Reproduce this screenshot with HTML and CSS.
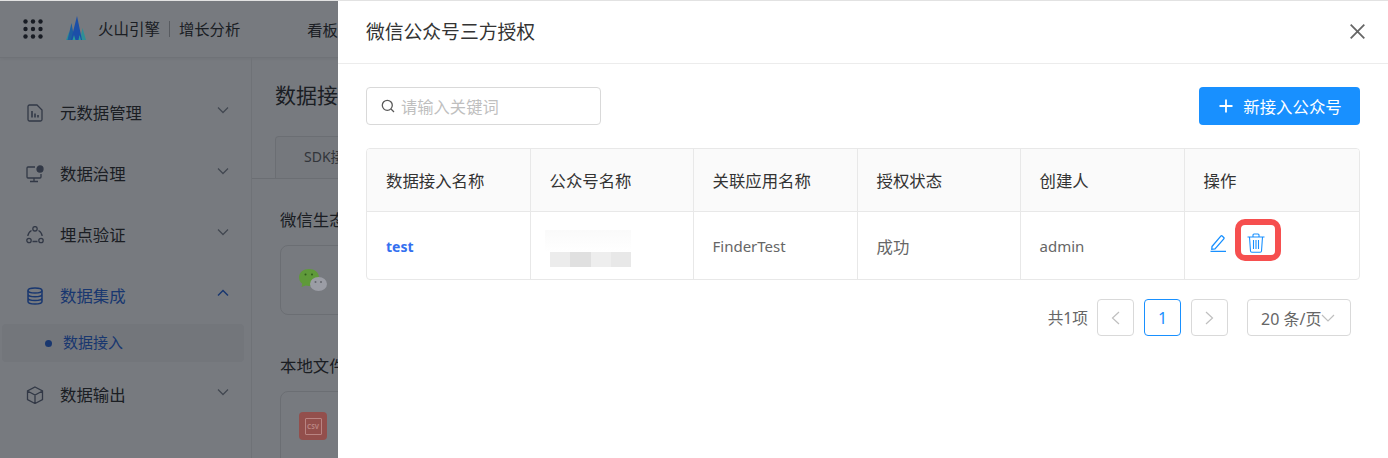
FILE: index.html
```html
<!DOCTYPE html>
<html lang="zh-CN">
<head>
<meta charset="utf-8">
<title>微信公众号三方授权</title>
<link rel="stylesheet" href="styles.css">
</head>
<body>
<div class="app">
  <header class="topbar">
    <svg class="grid-icon" width="20" height="20" viewBox="0 0 20 20"><g fill="#2b2e33"><circle cx="2.500" cy="2.500" r="2.200"/><circle cx="10" cy="2.500" r="2.200"/><circle cx="17.500" cy="2.500" r="2.200"/><circle cx="2.500" cy="10" r="2.200"/><circle cx="10" cy="10" r="2.200"/><circle cx="17.500" cy="10" r="2.200"/><circle cx="2.500" cy="17.500" r="2.200"/><circle cx="10" cy="17.500" r="2.200"/><circle cx="17.500" cy="17.500" r="2.200"/></g></svg>
    <svg class="logo over" width="20" height="25" viewBox="0 0 20 25"><path d="M0 24 3 16l3 8zM14 24l2.500-12 3.500 12z" fill="#2f8f96"/><path d="M1.500 24 5.500 7l3 17z" fill="#1d5fa0"/><path d="M5 24 11 0l5 24z" fill="#1c4fa8"/><path d="M6.500 24 8 19l1.500 5zM12.500 24l1-5 1.500 5z" fill="#2a9a9a"/></svg>
    <span class="brand">火山引擎</span>
    <span class="brand-sep"></span>
    <span class="brand-sub">增长分析</span>
    <span class="topnav">看板</span>
  </header>
  <div class="body">
    <nav class="sidebar">
      <div class="nav-item">
        <svg class="nav-icon" width="18" height="18" viewBox="0 0 18 18" fill="none" stroke="currentColor" stroke-width="1.300"><path d="M2 2.500a1.500 1.500 0 0 1 1.500-1.500H11l5 5v9.500a1.500 1.500 0 0 1-1.500 1.500h-11A1.500 1.500 0 0 1 2 15.500z"/><path d="M6 7v6.500M9 9.500v4M12 11v2.500" stroke-width="1.600"/></svg>
        <span class="nav-label">元数据管理</span>
        <svg class="chev" width="12" height="8" viewBox="0 0 12 8" fill="none" stroke="currentColor" stroke-width="1.300"><path d="M1 1.500 6 6.500l5-5"/></svg>
      </div>
      <div class="nav-item">
        <svg class="nav-icon" width="18" height="18" viewBox="0 0 18 18" fill="none" stroke="currentColor" stroke-width="1.300"><path d="M9 2H2a1 1 0 0 0-1 1v9a1 1 0 0 0 1 1h12a1 1 0 0 0 1-1V9M8 13v3M4 16.500h8"/><circle cx="14" cy="4" r="3" fill="currentColor"/></svg>
        <span class="nav-label">数据治理</span>
        <svg class="chev" width="12" height="8" viewBox="0 0 12 8" fill="none" stroke="currentColor" stroke-width="1.300"><path d="M1 1.500 6 6.500l5-5"/></svg>
      </div>
      <div class="nav-item">
        <svg class="nav-icon" width="18" height="18" viewBox="0 0 18 18" fill="none" stroke="currentColor" stroke-width="1.300"><circle cx="9" cy="2.800" r="2.200"/><circle cx="3" cy="14.500" r="2.200"/><circle cx="15" cy="14.500" r="2.200"/><path d="M5.500 4.500A7.500 7.500 0 0 0 1.800 10M12.500 4.500a7.500 7.500 0 0 1 3.700 5.500M6.500 15.500h5"/></svg>
        <span class="nav-label">埋点验证</span>
        <svg class="chev" width="12" height="8" viewBox="0 0 12 8" fill="none" stroke="currentColor" stroke-width="1.300"><path d="M1 1.500 6 6.500l5-5"/></svg>
      </div>
      <div class="nav-item nav-active">
        <svg class="nav-icon" width="18" height="18" viewBox="0 0 18 18" fill="none" stroke="currentColor" stroke-width="1.500"><ellipse cx="9" cy="3.500" rx="7" ry="2.500"/><path d="M2 3.500v11c0 1.400 3.100 2.500 7 2.500s7-1.100 7-2.500v-11M2 7.200c0 1.400 3.100 2.500 7 2.500s7-1.100 7-2.500M2 11c0 1.400 3.100 2.500 7 2.500s7-1.100 7-2.500"/></svg>
        <span class="nav-label">数据集成</span>
        <svg class="chev" width="12" height="8" viewBox="0 0 12 8" fill="none" stroke="currentColor" stroke-width="1.500"><path d="M1 6.500 6 1.500l5 5"/></svg>
      </div>
      <div class="nav-sub"><span class="nav-dot"></span><span class="nav-sub-label">数据接入</span></div>
      <div class="nav-item nav-last">
        <svg class="nav-icon" width="18" height="18" viewBox="0 0 18 18" fill="none" stroke="currentColor" stroke-width="1.300"><path d="M9 1l7.500 4v8.500L9 17.500l-7.500-4V5zM1.500 5 9 9l7.500-4M9 9v8.500"/></svg>
        <span class="nav-label">数据输出</span>
        <svg class="chev" width="12" height="8" viewBox="0 0 12 8" fill="none" stroke="currentColor" stroke-width="1.300"><path d="M1 1.500 6 6.500l5-5"/></svg>
      </div>
    </nav>
    <main class="main">
      <h1 class="page-title">数据接入</h1>
      <div class="tabs"><div class="tab">SDK接入</div></div>
      <div class="section">
        <h2 class="section-title">微信生态</h2>
        <div class="card">
          <svg class="over" width="28" height="22" viewBox="0 0 28 22"><path d="M10 0c5.500 0 10 3.300 10 8.500S15.500 17 10 17c-1.200 0-2.300-.2-3.400-.5L2.500 18l.8-3.300C1.200 13.200 0 11 0 8.500 0 3.300 4.500 0 10 0z" fill="#5f9a3a"/><ellipse cx="19.500" cy="15" rx="8.500" ry="7" fill="#9b9da5"/><circle cx="16.500" cy="13" r="1" fill="#63666d"/><circle cx="22" cy="13" r="1" fill="#63666d"/><circle cx="6.500" cy="5.500" r="1" fill="#2f5c1c"/><circle cx="13" cy="5.500" r="1" fill="#2f5c1c"/></svg>
        </div>
        <h2 class="section-title local">本地文件</h2>
        <div class="card card-tall">
          <div class="csv-badge over"><span class="csv-file">CSV</span></div>
        </div>
      </div>
    </main>
  </div>
</div>

<div class="mask"></div>
<div class="top-line"></div>

<aside class="drawer">
  <div class="drawer-head">
    <span class="drawer-title">微信公众号三方授权</span>
    <svg class="close" width="15" height="15" viewBox="0 0 15 15" fill="none" stroke="#666" stroke-width="1.800"><path d="M.7.7l13.600 13.600M14.300.7.7 14.300"/></svg>
  </div>
  <div class="drawer-body">
    <div class="toolbar">
      <div class="search">
        <svg width="14" height="14" viewBox="0 0 14 14" fill="none" stroke="#595959" stroke-width="1.300"><circle cx="6.300" cy="6.300" r="5"/><path d="M10 10l3 3"/></svg>
        <span class="placeholder">请输入关键词</span>
      </div>
      <button class="primary" type="button">
        <svg width="14" height="14" viewBox="0 0 14 14" fill="none" stroke="#fff" stroke-width="1.800"><path d="M7 .5v13M.5 7h13"/></svg>
        <span>新接入公众号</span>
      </button>
    </div>
    <div class="table-wrap">
      <table class="table">
        <colgroup><col class="c1"><col class="c2"><col class="c3"><col class="c4"><col class="c5"><col class="c6"></colgroup>
        <thead>
          <tr><th>数据接入名称</th><th>公众号名称</th><th>关联应用名称</th><th>授权状态</th><th>创建人</th><th>操作</th></tr>
        </thead>
        <tbody>
          <tr>
            <td><a class="link">test</a></td>
            <td><div class="blurred"><div class="blur-top"></div><div class="blur-bottom"><i class="b1"></i><i class="b2"></i><i class="b3"></i><i class="b4"></i></div></div></td>
            <td>FinderTest</td>
            <td class="cjk">成功</td>
            <td>admin</td>
            <td>
              <div class="actions">
                <svg class="edit" width="18" height="18" viewBox="0 0 18 18" fill="none" stroke="#1890ff" stroke-width="1.300"><path d="M3 12.500 11.800 2.200a1 1 0 0 1 1.400-.1l1.500 1.300a1 1 0 0 1 .1 1.400L6 15l-3.200.3zM1.500 17.400h15.500"/></svg>
                <span class="highlight">
                  <svg width="18" height="20" viewBox="0 0 18 20" fill="none" stroke="#1890ff" stroke-width="1.100"><path d="M.5 4h17M6 4V2a1 1 0 0 1 1-1h4a1 1 0 0 1 1 1v2M2.500 4l1 14a1.300 1.300 0 0 0 1.300 1.200h8.400a1.300 1.300 0 0 0 1.300-1.200l1-14M6.500 7v9M9 7v9M11.500 7v9"/></svg>
                </span>
              </div>
            </td>
          </tr>
        </tbody>
      </table>
    </div>
    <div class="pagination">
      <span class="total">共1项</span>
      <span class="page-btn"><svg width="9" height="14" viewBox="0 0 9 14" fill="none" stroke="#bfbfbf" stroke-width="1.200"><path d="M8 1 1.500 7 8 13"/></svg></span>
      <span class="page-btn page-current">1</span>
      <span class="page-btn"><svg width="9" height="14" viewBox="0 0 9 14" fill="none" stroke="#bfbfbf" stroke-width="1.200"><path d="M1 1l6.500 6L1 13"/></svg></span>
      <span class="page-size">20 条/页<svg width="14" height="8" viewBox="0 0 14 8" fill="none" stroke="#bfbfbf" stroke-width="1.200"><path d="M1 1l6 6 6-6"/></svg></span>
    </div>
  </div>
</aside>
</body>
</html>
```

FILE: styles.css
```css
* { box-sizing: border-box; }
html, body { margin: 0; padding: 0; height: 458px; overflow: hidden; }
body {
  font-family: "Noto Sans", "Noto Sans CJK SC", sans-serif;
  background: #fff;
  color: #333;
  position: relative;
}
.app { height: 458px; display: flex; flex-direction: column; overflow: hidden; }
.over { position: relative; z-index: 1; }
.topbar {
  height: 58px;
  flex: none;
  display: flex;
  align-items: center;
  padding-left: 23px;
  border-bottom: 1px solid #eee;
  box-shadow: 0 1px 4px rgba(0,0,0,.06);
  color: #333;
  font-size: 14px;
  white-space: nowrap;
}
.logo { margin-left: 23px; margin-right: 12px; }
.brand { font-size: 15.500px; line-height: 20px; }
.brand-sep { width: 1px; height: 16px; background: #bbb; margin: 0 9px; }
.brand-sub { font-size: 15.300px; line-height: 20px; }
.topnav { font-size: 15.300px; margin-left: 67px; }
.body { flex: 1; display: flex; min-height: 0; }
.sidebar {
  width: 252px;
  flex: none;
  border-right: 1px solid #eee;
  padding-top: 24px;
}
.nav-item {
  height: 61px;
  padding: 0 22px 0 26px;
  display: flex;
  align-items: center;
  color: #333;
  font-size: 16.400px;
}
.nav-icon { flex: none; color: #666e80; margin-right: 16px; }
.nav-label { flex: 1; margin-top: -2px; }
.chev { color: #8a8f99; margin-top: -6px; }
.nav-active, .nav-active .nav-icon, .nav-active .chev { color: #2f6bdc; }
.nav-sub {
  margin: -2px 7px 0 2px;
  height: 38px;
  background: #f5f5f7;
  border-radius: 4px;
  display: flex;
  align-items: center;
  padding-left: 43px;
  font-size: 15px;
  color: #2f6bdc;
}
.nav-sub-label { margin-top: -3px; }
.nav-dot { width: 7px; height: 7px; border-radius: 50%; background: #2f6bdc; margin-right: 11px; }
.nav-last { margin-top: 2px; }
.main { flex: 1; padding-top: 22px; overflow: hidden; min-width: 0; }
.page-title { margin: 0 0 26px 23px; font-size: 21px; font-weight: 400; line-height: 30px; color: #333; white-space: nowrap; }
.tabs { border-bottom: 1px solid #e4e4e4; padding-left: 23px; height: 43px; }
.tab {
  width: 120px;
  height: 42px;
  border: 1px solid #e4e4e4;
  border-bottom: 0;
  border-radius: 4px 4px 0 0;
  background: #fafafa;
  font-size: 14px;
  color: #666;
  line-height: 40px;
  padding-left: 28px;
  white-space: nowrap;
}
.section { padding: 30px 0 0 28px; }
.section-title { margin: 0 0 14px; font-size: 16.400px; font-weight: 400; line-height: 22px; color: #333; white-space: nowrap; }
.section-title.local { margin-top: 40px; }
.card {
  width: 300px;
  height: 70px;
  border: 1px solid #e4e4e4;
  border-radius: 8px;
  padding: 23px 0 0 18px;
}
.card-tall { height: 100px; padding-top: 20px; }
.csv-badge {
  width: 28px;
  height: 28px;
  border-radius: 4px;
  background: #934f4c;
  display: flex;
  align-items: center;
  justify-content: center;
}
.csv-file {
  width: 17px;
  height: 17px;
  font-size: 6.500px;
  font-weight: 700;
  line-height: 15px;
  text-align: center;
  border: 1px solid #b98482;
  border-radius: 1px;
  color: #b98482;
}
.mask { position: absolute; inset: 0; background: rgba(8, 13, 22, .55); }
.top-line { position: absolute; left: 0; right: 0; top: 0; height: 1px; background: #e2e2e2; }
.drawer {
  position: absolute;
  left: 338px;
  top: 1px;
  right: 0;
  bottom: 0;
  z-index: 2;
  background: #fff;
  display: flex;
  flex-direction: column;
}
.drawer-head {
  height: 63px;
  flex: none;
  border-bottom: 1px solid #ececec;
  display: flex;
  align-items: center;
  justify-content: space-between;
  padding: 0 23px 1px 28px;
}
.drawer-title { font-size: 18.800px; color: #333; line-height: 28px; }
.drawer-body { padding: 23px 28px 0; }
.toolbar { display: flex; justify-content: space-between; align-items: center; }
.search {
  width: 235px;
  height: 38px;
  border: 1px solid #d9d9d9;
  border-radius: 4px;
  display: flex;
  align-items: center;
  gap: 6px;
  padding-left: 14px;
}
.placeholder { font-size: 16.300px; color: #bfbfbf; }
.primary {
  width: 161px;
  height: 38px;
  border: 0;
  border-radius: 4px;
  background: #1890ff;
  color: #fff;
  font: inherit;
  font-size: 16.400px;
  display: flex;
  align-items: center;
  justify-content: center;
  gap: 10px;
  padding: 0 0 0 2px;
}
.table-wrap { margin-top: 23px; border: 1px solid #e8e8e8; border-radius: 4px; overflow: hidden; }
.table { width: 100%; table-layout: fixed; border-collapse: collapse; font-size: 15px; }
.c1 { width: 163px; } .c2 { width: 163px; } .c3 { width: 164px; } .c4 { width: 163px; } .c5 { width: 164px; }
.table th, .table td { padding: 0 0 0 19px; text-align: left; border-right: 1px solid #e8e8e8; }
.table th:last-child, .table td:last-child { border-right: 0; }
.table th { height: 62px; background: #fafafa; font-weight: 400; font-size: 16.400px; color: #333; border-bottom: 1px solid #e8e8e8; }
.table td { height: 68px; color: #666; padding-top: 1px; }
.table td.cjk { font-size: 16.400px; }
.link { color: #3370f0; font-weight: 700; font-size: 14px; }
.blurred { width: 86px; height: 37px; margin: 6px 0 0 -5px; display: flex; flex-direction: column; justify-content: flex-end; background: linear-gradient(#fafafa, #fff 60%); }
.blur-top { flex: 1; }
.blur-bottom { height: 15px; display: flex; padding-left: 5px; }
.blur-bottom i { display: block; height: 15px; }
.b1 { width: 20px; background: #ececec; }
.b2 { width: 21px; background: #e0e0e0; }
.b3 { width: 20px; background: #eeeeee; }
.b4 { width: 20px; background: #e8e8e8; }
.actions { display: flex; align-items: center; gap: 8px; margin: 0 0 11px 5px; }
.edit { margin-top: 6px; }
.highlight {
  width: 46px;
  height: 42px;
  border: 6.500px solid #f64f4f;
  border-radius: 10px;
  display: flex;
  align-items: center;
  justify-content: center;
  padding: 6px 3px 0 0;
}
.pagination { display: flex; align-items: center; justify-content: flex-end; margin-top: 19px; padding-right: 9px; font-size: 15.700px; color: #666; }
.total { margin-right: 9px; }
.page-btn {
  width: 37px;
  height: 37px;
  border: 1px solid #d9d9d9;
  border-radius: 4px;
  display: flex;
  align-items: center;
  justify-content: center;
  margin-right: 10px;
  font-size: 16px;
}
.page-current { border-color: #1890ff; color: #1890ff; }
.page-size {
  width: 104px;
  height: 37px;
  margin-left: 9px;
  border: 1px solid #d9d9d9;
  border-radius: 4px;
  display: flex;
  align-items: center;
  padding-left: 13px;
  font-size: 16px;
  white-space: nowrap;
}
```
